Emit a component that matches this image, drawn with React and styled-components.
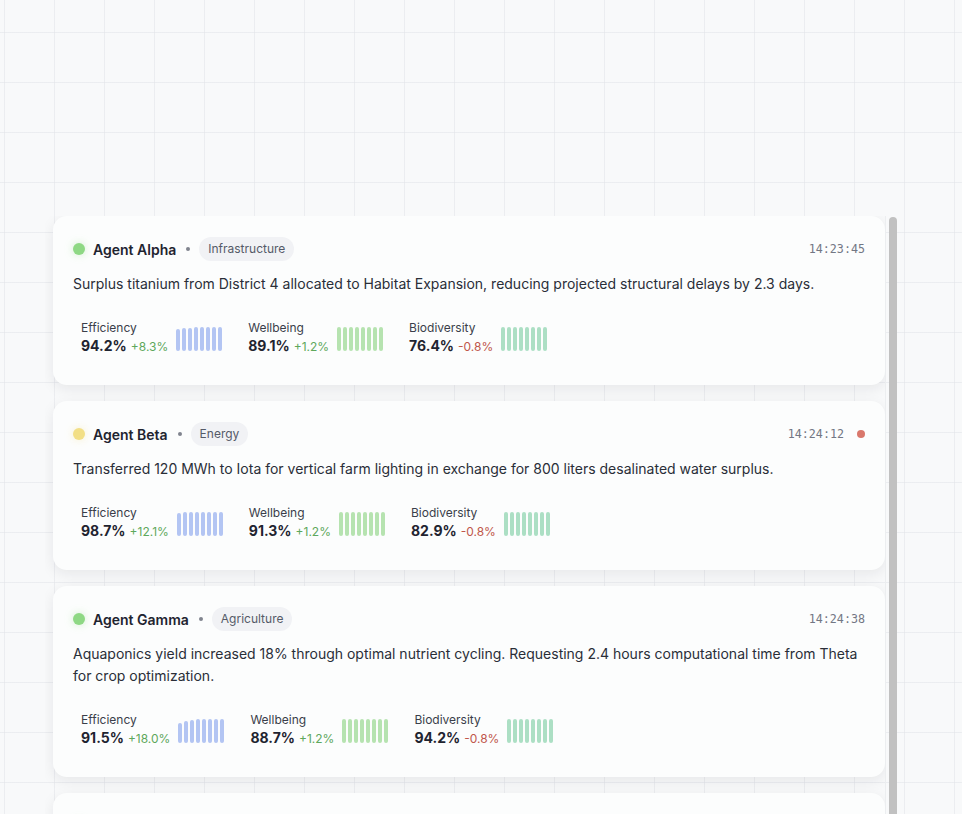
import React from 'react';
import styled, { createGlobalStyle } from 'styled-components';

const GlobalStyle = createGlobalStyle`
  html, body {
    margin: 0;
    padding: 0;
    overflow: hidden;
  }
  body {
    font-family: Inter, "Noto Sans", sans-serif;
    background-color: #f8f9fa;
    background-image:
      linear-gradient(to right, rgba(225, 228, 232, 0.55) 1px, transparent 1px),
      linear-gradient(to bottom, rgba(225, 228, 232, 0.55) 1px, transparent 1px);
    background-size: 50px 50px;
    background-position: 4px 32px;
  }
`;

const Page = styled.main`
  padding: 216px 63px 0 45px;
`;

const Frame = styled.div`
  display: flex;
  height: 700px;
`;

const Feed = styled.section`
  flex: 1;
  overflow: hidden;
  padding: 0 0 0 8px;
  display: flex;
  flex-direction: column;
  gap: 16px;
`;

const Track = styled.div`
  box-sizing: border-box;
  width: 14px;
  flex-shrink: 0;
  border-left: 1px solid #eceef0;
  padding: 1px 2px 0 3px;
`;

const Thumb = styled.div`
  height: 640px;
  background: #c1c1c1;
  border-radius: 4px;
`;

const Card = styled.article`
  flex-shrink: 0;
  background: #fcfdfd;
  border-radius: 14px;
  padding: 20px;
  box-shadow: 0 4px 14px rgba(20, 24, 40, 0.08);
`;

const Header = styled.header`
  display: flex;
  align-items: center;
  height: 26px;
  margin-bottom: 11px;
`;

const StatusDot = styled.span`
  width: 12px;
  height: 12px;
  border-radius: 50%;
  background: ${(p) => p.$color};
  box-shadow: 0 0 8px ${(p) => p.$color}66;
  margin-right: 8px;
`;

const Name = styled.span`
  font-size: 14px;
  font-weight: 600;
  color: #1f2430;
`;

const Sep = styled.span`
  width: 4px;
  height: 4px;
  border-radius: 50%;
  background: #80848e;
  margin: 0 9px 0 10px;
`;

const Tag = styled.span`
  font-size: 12px;
  color: #555a68;
  background: #f1f2f5;
  border-radius: 12px;
  height: 24px;
  line-height: 24px;
  padding: 0 9px;
`;

const Time = styled.span`
  margin-left: auto;
  font-family: "DejaVu Sans Mono", "Liberation Mono", monospace;
  font-size: 11.7px;
  color: #737784;
`;

const Alert = styled.span`
  width: 8px;
  height: 8px;
  border-radius: 50%;
  background: #d9786c;
  margin-left: 13px;
`;

const Message = styled.p`
  margin: 0 0 14px;
  font-size: 14px;
  line-height: 22px;
  color: #2a2e38;
`;

const Metrics = styled.div`
  display: flex;
  align-items: center;
  gap: 26px;
  padding: 11px 8px 8px;
`;

const Metric = styled.div`
  display: flex;
  align-items: center;
  gap: 8px;
`;

const Label = styled.div`
  font-size: 12px;
  line-height: 16px;
  color: #3a3e4a;
`;

const Value = styled.div`
  font-size: 14px;
  line-height: 20px;
  font-weight: 700;
  color: #1f2430;

  small {
    font-size: 12px;
    font-weight: 400;
    margin-left: 4px;
    color: ${(p) => (p.$up ? '#5ea85c' : '#c0574b')};
  }
`;

const Bars = styled.div`
  display: flex;
  align-items: flex-end;
  gap: 2px;
  height: 24px;
`;

const Bar = styled.span`
  width: 4px;
  border-radius: 2px;
  background: ${(p) => p.$color};
`;

const barColors = {
  Efficiency: '#b3c5f3',
  Wellbeing: '#b6e3b0',
  Biodiversity: '#acdfc4',
};

const full = [24, 24, 24, 24, 24, 24, 24, 24];

const entries = [
  {
    agent: 'Agent Alpha',
    dot: '#8ed884',
    tag: 'Infrastructure',
    time: '14:23:45',
    text: 'Surplus titanium from District 4 allocated to Habitat Expansion, reducing projected structural delays by 2.3 days.',
    metrics: [
      ['Efficiency', '94.2%', '+8.3%', [22, 23, 23, 24, 24, 24, 24, 24]],
      ['Wellbeing', '89.1%', '+1.2%', full],
      ['Biodiversity', '76.4%', '-0.8%', full],
    ],
  },
  {
    agent: 'Agent Beta',
    dot: '#f2df86',
    tag: 'Energy',
    time: '14:24:12',
    alert: true,
    text: 'Transferred 120 MWh to Iota for vertical farm lighting in exchange for 800 liters desalinated water surplus.',
    metrics: [
      ['Efficiency', '98.7%', '+12.1%', [23, 24, 24, 24, 24, 24, 24, 24]],
      ['Wellbeing', '91.3%', '+1.2%', full],
      ['Biodiversity', '82.9%', '-0.8%', full],
    ],
  },
  {
    agent: 'Agent Gamma',
    dot: '#8ed884',
    tag: 'Agriculture',
    time: '14:24:38',
    text: 'Aquaponics yield increased 18% through optimal nutrient cycling. Requesting 2.4 hours computational time from Theta for crop optimization.',
    metrics: [
      ['Efficiency', '91.5%', '+18.0%', [20, 22, 23, 24, 24, 24, 24, 24]],
      ['Wellbeing', '88.7%', '+1.2%', full],
      ['Biodiversity', '94.2%', '-0.8%', full],
    ],
  },
  {
    agent: 'Agent Delta',
    dot: '#8ed884',
    tag: 'Water',
    time: '14:25:03',
    text: 'Desalination throughput stabilized at 4,200 liters per hour after membrane maintenance in District 2.',
    metrics: [
      ['Efficiency', '93.4%', '+2.6%', full],
      ['Wellbeing', '90.2%', '+0.9%', full],
      ['Biodiversity', '88.1%', '-0.4%', full],
    ],
  },
];

function MetricBlock({ label, value, delta, bars }) {
  return (
    <Metric>
      <div>
        <Label>{label}</Label>
        <Value $up={delta.startsWith('+')}>
          {value}
          <small>{delta}</small>
        </Value>
      </div>
      <Bars>
        {bars.map((h, i) => (
          <Bar key={i} $color={barColors[label]} style={{ height: h }} />
        ))}
      </Bars>
    </Metric>
  );
}

export default function App() {
  return (
    <>
      <GlobalStyle />
      <Page>
        <Frame>
          <Feed>
            {entries.map((e) => (
              <Card key={e.agent}>
                <Header>
                  <StatusDot $color={e.dot} />
                  <Name>{e.agent}</Name>
                  <Sep />
                  <Tag>{e.tag}</Tag>
                  <Time>{e.time}</Time>
                  {e.alert && <Alert />}
                </Header>
                <Message>{e.text}</Message>
                <Metrics>
                  {e.metrics.map(([label, value, delta, bars]) => (
                    <MetricBlock key={label} label={label} value={value} delta={delta} bars={bars} />
                  ))}
                </Metrics>
              </Card>
            ))}
          </Feed>
          <Track>
            <Thumb />
          </Track>
        </Frame>
      </Page>
    </>
  );
}
